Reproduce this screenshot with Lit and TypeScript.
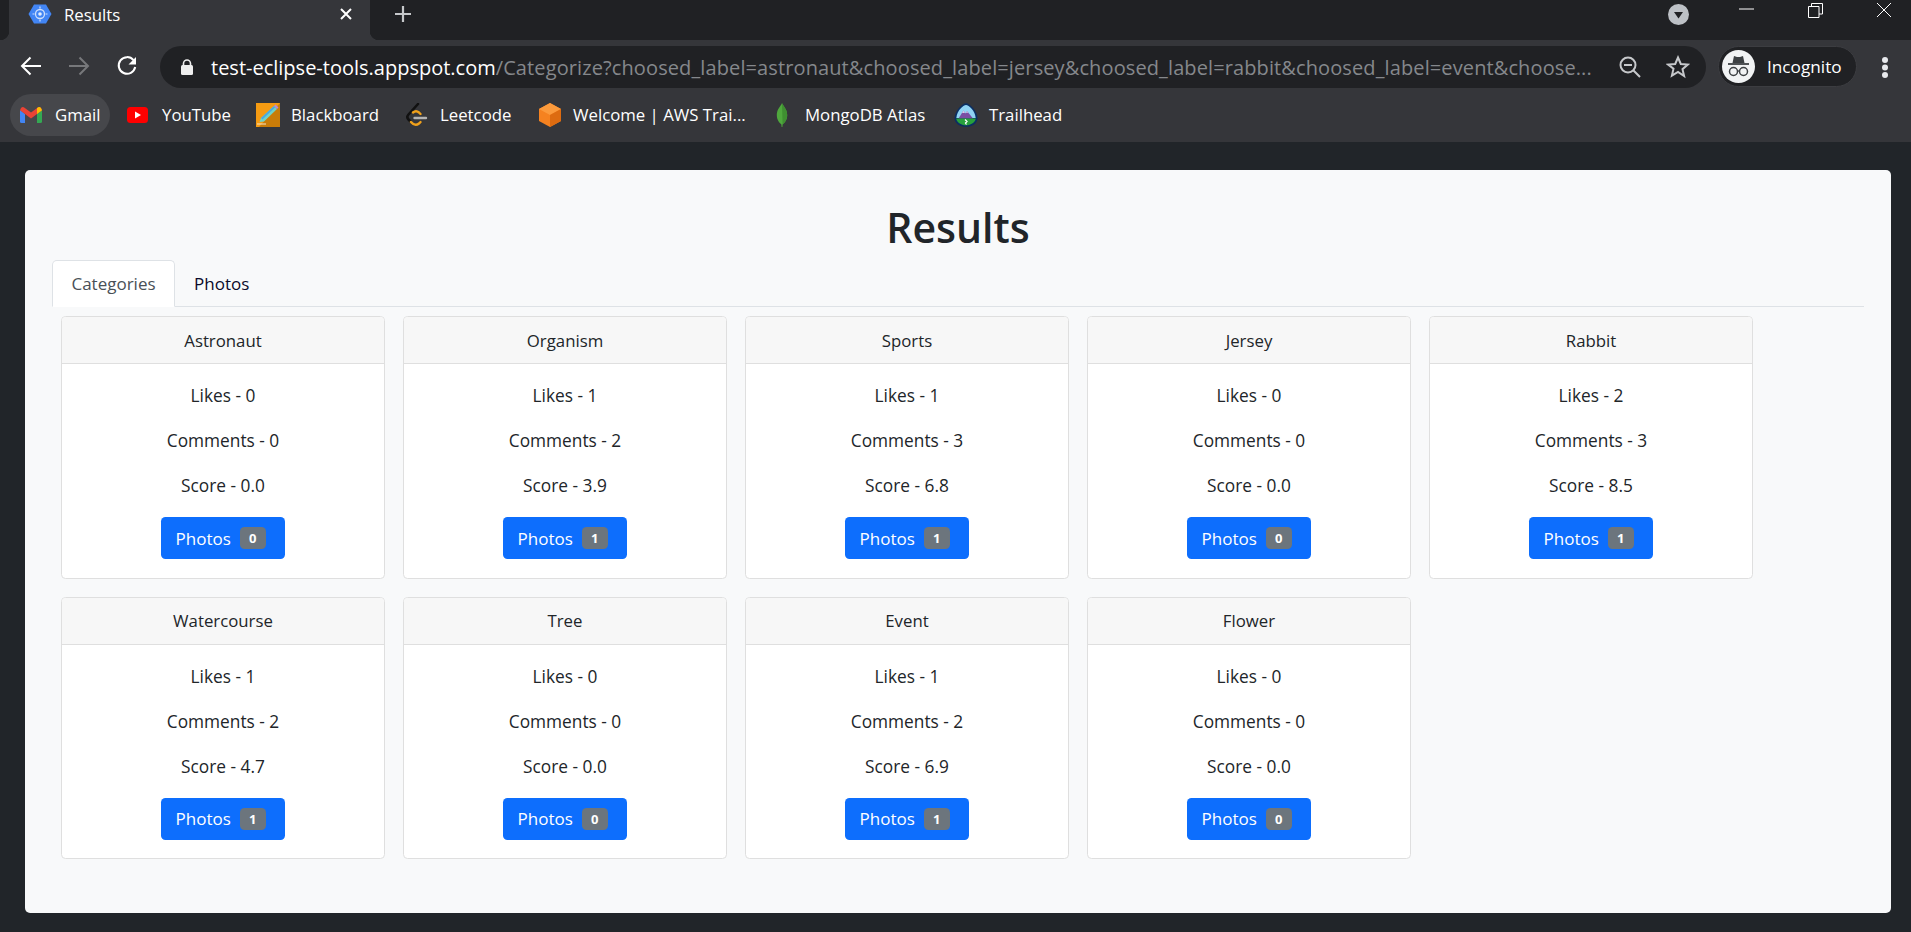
import { LitElement, html, css } from "lit";
import { customElement } from "lit/decorators.js";

const CARDS = [
  ["Astronaut", 0, 0, "0.0", 0],
  ["Organism", 1, 2, "3.9", 1],
  ["Sports", 1, 3, "6.8", 1],
  ["Jersey", 0, 0, "0.0", 0],
  ["Rabbit", 2, 3, "8.5", 1],
  ["Watercourse", 1, 2, "4.7", 1],
  ["Tree", 0, 0, "0.0", 0],
  ["Event", 1, 2, "6.9", 1],
  ["Flower", 0, 0, "0.0", 0],
] as const;

const gmail = html`<svg class="i22" viewBox="0 0 22 16"><path d="M0 3v11.5A1.5 1.5 0 0 0 1.5 16H5V7z" fill="#4285f4"/><path d="M22 3v11.5a1.5 1.5 0 0 1-1.5 1.5H17V7z" fill="#34a853"/><path d="M0 3.2 1 1c1-1.2 2.4-1.2 3.5-.3L11 5.600 17.500.7C18.600-.2 20-.2 21 1l1 2.200L17 7l-6 4.600L5 7z" fill="#ea4335"/><path d="M17 7V1.100l.5-.4C18.600-.2 20-.2 21 1l1 2.200z" fill="#fbbc04"/></svg>`;
const youtube = html`<svg class="i22" viewBox="0 0 22 16"><rect width="21" height="16" rx="3.500" fill="#f00"/><path d="M8 4.500 14 8l-6 3.500z" fill="#fff"/></svg>`;
const blackboard = html`<svg class="i24" viewBox="0 0 24 24"><rect width="24" height="24" fill="#f59b12"/><path d="M24 0v24H3z" fill="#c97c08"/><path d="M3.500 19 5 15 18 3l3 3L8 18.500z" fill="#6fd3c8"/><path d="M5 15 18 3l1.200 1.200L6.500 16.500z" fill="#4aa8e0"/><path d="m18 3 1.500-1.500 3 3L21 6z" fill="#b78ad6"/><path d="M1 21h9" stroke="#f7e6c8" stroke-width="1"/></svg>`;
const leetcode = html`<svg class="i24" viewBox="0 0 24 24"><path d="M13 1 3.500 11.500c-1.500 1.700-1.500 3.500 0 5l2 2" fill="none" stroke="#111" stroke-width="2.600" stroke-linecap="round"/><path d="M8 9.500c2-1.800 4-1.800 6 0l1.500 1.500M6 19c2.500 3 5.500 3.500 8 1.500l1.500-1.500" fill="none" stroke="#f0a11b" stroke-width="2.400" stroke-linecap="round"/><path d="M9.500 15H21" stroke="#b3b3b3" stroke-width="2.400" stroke-linecap="round"/></svg>`;
const aws = html`<svg class="i24" viewBox="0 0 24 24"><path d="M12 0 23 6v12l-11 6-11-6V6z" fill="#f58220"/><path d="M12 0 23 6 12 12 1 6z" fill="#fb9a3c"/><path d="M12 12 23 6v12l-11 6z" fill="#dd6b10"/></svg>`;
const mongo = html`<svg class="i24" viewBox="0 0 24 24"><path d="M12 0c1 3 5.200 6 5.200 12 0 5-2.700 8-4.600 9.500L12.400 24h-.8l-.2-2.500C9.500 20 6.800 17 6.800 12 6.800 6 11 3 12 0z" fill="#4fa83d"/><path d="M12 0c1 3 5.200 6 5.200 12 0 5-2.700 8-4.600 9.500z" fill="#3f8f31"/></svg>`;
const trailhead = html`<svg class="i24" viewBox="0 0 24 24"><path d="M12 .2c3.500 0 11 7 11.500 15 0 5-5.500 8.600-11.500 8.600S.5 20.200.5 15.200C1 7.200 8.500.2 12 .2z" fill="#0b2f63"/><path d="M12 2c2.800 0 9 5.500 9.700 13H2.300C3 7.500 9.200 2 12 2z" fill="#8fd3f4"/><path d="M4.500 15.500 9.500 7.500l2 3 1.500-2.500 6 7.500z" fill="#7a4ea3"/><path d="M9.500 7.500 11 10H8zM13 8l1.300 1.800h-2.500z" fill="#d9c6ea"/><path d="M2.200 15.500h19.600c-.3 3.500-4.800 6.800-9.800 6.800s-9.500-3.300-9.800-6.800z" fill="#27a03c"/><path d="m11 16.500 2 2-1.500 1.500 1 1.500" fill="none" stroke="#fff" stroke-width="1.300"/></svg>`;

const BOOKMARKS = [
  ["Gmail", gmail, 45],
  ["YouTube", youtube, 67],
  ["Blackboard", blackboard, 87],
  ["Leetcode", leetcode, 71],
  ["Welcome | AWS Trai...", aws, 170],
  ["MongoDB Atlas", mongo, 122],
  ["Trailhead", trailhead, 70],
] as const;

@customElement("app-root")
export class AppRoot extends LitElement {
  static styles = css`
    :host {
      display: block;
      width: 1911px;
      height: 932px;
      overflow: hidden;
      background: #212529;
      font-family: "Open Sans", "Noto Sans", sans-serif;
      color: #212529;
    }
    svg { display: block; flex: none; }
    .strip {
      height: 40px;
      background: #202124;
      display: flex;
      align-items: stretch;
      padding-left: 9px;
    }
    .tab {
      position: relative;
      width: 361px;
      box-sizing: border-box;
      background: #35363a;
      display: flex;
      align-items: center;
      padding: 0 18px 12px 19px;
      color: #fff;
      font-size: 16.800px;
    }
    .tab::before, .tab::after {
      content: "";
      position: absolute;
      bottom: 0;
      width: 9px;
      height: 9px;
      background: #35363a;
    }
    .tab::before { left: -9px; -webkit-mask: radial-gradient(circle at 0 0, transparent 9px, #000 9.500px); mask: radial-gradient(circle at 0 0, transparent 9px, #000 9.500px); }
    .tab::after { right: -9px; -webkit-mask: radial-gradient(circle at 100% 0, transparent 9px, #000 9.500px); mask: radial-gradient(circle at 100% 0, transparent 9px, #000 9.500px); }
    .favicon { width: 24px; height: 20px; margin-right: 12px; }
    .tab-title { flex: 1; }
    .tab-x { width: 12px; height: 12px; }
    .plus { width: 16px; height: 16px; margin: 6px 0 0 25px; }
    .strip-right { margin-left: auto; display: flex; align-items: flex-start; }
    .tsearch { width: 21px; height: 21px; margin: 4px 50px 0 0; }
    .wmin { width: 15px; height: 2px; margin: 8px 54px 0 0; }
    .wres { width: 15px; height: 15px; margin: 3px 53px 0 0; }
    .wclose { width: 16px; height: 16px; margin: 2px 19px 0 0; }

    .toolbar {
      height: 48px;
      background: #35363a;
      display: flex;
      align-items: flex-end;
      box-sizing: border-box;
      padding-left: 20px;
    }
    .navs { display: flex; gap: 26px; align-self: center; padding-top: 4px; width: 140px; flex: none; }
    .nav { width: 22px; height: 20px; }
    .omni {
      width: 1546px;
      height: 42px;
      box-sizing: border-box;
      background: #202124;
      border-radius: 21px;
      display: flex;
      align-items: center;
      padding: 0 0 0 20px;
      flex: none;
    }
    .lock { width: 14px; height: 16px; margin-right: 17px; }
    .url { flex: none; width: 1388px; font-size: 20px; white-space: nowrap; color: #85888c; letter-spacing: 0.110px; }
    .url b { font-weight: 400; color: #fff; letter-spacing: 0; }
    .zoom { width: 22px; height: 22px; margin-left: 20px; }
    .star { width: 24px; height: 24px; margin-left: 25px; }
    .profile {
      width: 139px;
      height: 41px;
      box-sizing: border-box;
      margin: 0 0 1px 12px;
      background: #202124;
      border: 1px solid #3c3d41;
      border-radius: 21px;
      display: flex;
      align-items: center;
      padding-left: 3px;
      color: #fff;
      font-size: 17.200px;
      flex: none;
    }
    .avatar { width: 33px; height: 33px; margin-right: 12px; }
    .dots { width: 8px; height: 22px; margin: 0 0 10px 24px; flex: none; }

    .bookmarks {
      height: 54px;
      box-sizing: border-box;
      background: #35363a;
      display: flex;
      align-items: center;
      padding-left: 10px;
      color: #fff;
      font-size: 16.800px;
    }
    .bm {
      height: 42px;
      box-sizing: border-box;
      display: flex;
      align-items: center;
      gap: 11px;
      padding: 0 10px;
      border-radius: 21px;
      white-space: nowrap;
      margin-right: 7px;
    }
    .bm span { padding-bottom: 2px; }
    .bm:first-child { background: #46474b; }
    .i22 { width: 22px; height: 16px; margin-right: 2px; }
    .i24 { width: 24px; height: 24px; }

    .page { padding: 28px 0 0 25px; }
    .panel {
      width: 1866px;
      height: 743px;
      box-sizing: border-box;
      background: #f8f9fa;
      border-radius: 5px;
      padding: 30px 27px 0 27px;
    }
    h1 {
      margin: 0 0 6px;
      text-align: center;
      font-size: 41px;
      line-height: 54px;
      font-weight: 600;
    }
    .tabs { display: flex; height: 47px; box-sizing: border-box; border-bottom: 1px solid #dee2e6; font-size: 17px; }
    .t {
      height: 47px;
      box-sizing: border-box;
      padding: 0 18px;
      display: flex;
      align-items: center;
      border: 1px solid transparent;
      border-radius: 5px 5px 0 0;
      color: #0a0a2a;
    }
    .t.active { width: 123px; justify-content: center; padding: 0; background: #fff; color: #495057; border-color: #dee2e6 #dee2e6 #fff; }
    .t.plain { padding-left: 18px; }
    .grid {
      display: grid;
      grid-template-columns: repeat(5, 324px);
      gap: 18px;
      padding: 9px 0 0 9px;
    }
    .card {
      height: 262.500px;
      box-sizing: border-box;
      background: #fff;
      border: 1px solid #dfdfdf;
      border-radius: 4.500px;
      text-align: center;
      font-size: 16.800px;
      line-height: 27px;
    }
    .card-h {
      height: 47px;
      box-sizing: border-box;
      display: flex;
      align-items: center;
      justify-content: center;
      background: #f7f7f7;
      border-bottom: 1px solid #dfdfdf;
      border-radius: 3.500px 3.500px 0 0;
    }
    .card-b { padding: 18px 18px 0; display: flex; flex-direction: column; align-items: center; }
    .card-b p { margin: 0 0 18px; font-size: 17.300px; }
    .btn {
      width: 124px;
      height: 42px;
      box-sizing: border-box;
      background: #0d6efd;
      color: #fff;
      border-radius: 4.500px;
      display: flex;
      align-items: center;
      gap: 9px;
      padding-left: 14.500px;
      font-size: 17px;
    }
    .badge {
      width: 26px;
      height: 22px;
      background: #6c757d;
      border-radius: 4.500px;
      color: #fff;
      font-size: 13px;
      font-weight: 700;
      line-height: 22px;
      text-align: center;
    }
  `;

  render() {
    return html`
      <div class="strip">
        <div class="tab">
          <svg class="favicon" viewBox="0 0 24 20">
            <path d="M6 0.500h12L23.500 10 18 19.500H6L0.500 10z" fill="#4285f4"/>
            <circle cx="12" cy="10" r="4.500" fill="none" stroke="#cfe0fc" stroke-width="1.300"/>
            <circle cx="12" cy="10" r="1.800" fill="#e6effe"/>
            <path d="M12 2.500v2M12 15.500v2M4.500 10h2M17.500 10h2" stroke="#cfe0fc" stroke-width="1.200"/>
          </svg>
          <span class="tab-title">Results</span>
          <svg class="tab-x" viewBox="0 0 12 12"><path d="M1 1l10 10M11 1 1 11" stroke="#fff" stroke-width="2"/></svg>
        </div>
        <svg class="plus" viewBox="0 0 16 16"><path d="M8 0v16M0 8h16" stroke="#c6c8cb" stroke-width="2.200"/></svg>
        <div class="strip-right">
          <svg class="tsearch" viewBox="0 0 21 21"><circle cx="10.500" cy="10.500" r="10.500" fill="#bdc1c6"/><path d="M6 8h9l-4.500 6.500z" fill="#202124"/></svg>
          <svg class="wmin" viewBox="0 0 15 2"><path d="M0 1h15" stroke="#fff" stroke-width="1"/></svg>
          <svg class="wres" viewBox="0 0 15 15"><path d="M.5 3.500h10.500v11H.5zM3.500 3.500V.5h11v10.500H11" fill="none" stroke="#fff" stroke-width="1"/></svg>
          <svg class="wclose" viewBox="0 0 16 16"><path d="M1 1l14 14M15 1 1 15" stroke="#fff" stroke-width="1"/></svg>
        </div>
      </div>
      <div class="toolbar">
        <div class="navs">
          <svg class="nav" viewBox="0 0 22 20"><path d="M21 10H2M10.500 1.500 2 10l8.500 8.500" fill="none" stroke="#fff" stroke-width="2"/></svg>
          <svg class="nav" viewBox="0 0 22 20"><path d="M1 10h19M11.500 1.500 20 10l-8.500 8.500" fill="none" stroke="#77787b" stroke-width="2"/></svg>
          <svg class="nav" viewBox="0 0 22 20"><path d="M17.500 4.200A8.300 8.300 0 1 0 19.200 11" fill="none" stroke="#fff" stroke-width="2"/><path d="M20 1v7.500h-7.500z" fill="#fff"/></svg>
        </div>
        <div class="omni">
          <svg class="lock" viewBox="0 0 14 16"><path d="M3.500 7V4.500a3.500 3.500 0 0 1 7 0V7" fill="none" stroke="#eee" stroke-width="1.600"/><rect x="1" y="6" width="12" height="10" rx="1.500" fill="#eee"/></svg>
          <div class="url"><b>test-eclipse-tools.appspot.com</b>/Categorize?choosed_label=astronaut&amp;choosed_label=jersey&amp;choosed_label=rabbit&amp;choosed_label=event&amp;choose...</div>
          <svg class="zoom" viewBox="0 0 22 22"><circle cx="9" cy="9" r="7.500" fill="none" stroke="#c6c8cb" stroke-width="2"/><path d="M5 9h8M14.500 14.500 21 21" stroke="#c6c8cb" stroke-width="2"/></svg>
          <svg class="star" viewBox="0 0 24 24"><path d="m12 2.500 2.800 6.500 7 .6-5.300 4.600 1.600 6.900L12 17l-6.100 3.600 1.600-6.900L2.200 9.600l7-.6z" fill="none" stroke="#c6c8cb" stroke-width="2"/></svg>
        </div>
        <div class="profile">
          <svg class="avatar" viewBox="0 0 33 33">
            <circle cx="16.500" cy="16.500" r="16.500" fill="#f1f3f4"/>
            <path d="M10.500 13l1.500-7 3 1h3l3-1 1.500 7z" fill="#3c4043"/>
            <path d="M6 14h21" stroke="#3c4043" stroke-width="1.800"/>
            <circle cx="11.500" cy="21.500" r="4" fill="none" stroke="#3c4043" stroke-width="1.500"/>
            <circle cx="21.500" cy="21.500" r="4" fill="none" stroke="#3c4043" stroke-width="1.500"/>
            <path d="M15.500 21h2" stroke="#3c4043" stroke-width="1.300"/>
          </svg>
          Incognito
        </div>
        <svg class="dots" viewBox="0 0 8 22"><circle cx="4" cy="4" r="3" fill="#e8eaed"/><circle cx="4" cy="11.500" r="3" fill="#e8eaed"/><circle cx="4" cy="19" r="3" fill="#e8eaed"/></svg>
      </div>
      <div class="bookmarks">
        ${BOOKMARKS.map(([label, icon, w]) => html`<div class="bm">${icon}<span style="width:${w}px">${label}</span></div>`)}
      </div>
      <div class="page">
        <div class="panel">
          <h1>Results</h1>
          <div class="tabs">
            <div class="t active">Categories</div>
            <div class="t plain">Photos</div>
          </div>
          <div class="grid">
            ${CARDS.map(([name, likes, comments, score, photos]) => html`
              <div class="card">
                <div class="card-h">${name}</div>
                <div class="card-b">
                  <p>Likes - ${likes}</p>
                  <p>Comments - ${comments}</p>
                  <p>Score - ${score}</p>
                  <div class="btn"><span>Photos</span><span class="badge">${photos}</span></div>
                </div>
              </div>`)}
          </div>
        </div>
      </div>
    `;
  }
}
